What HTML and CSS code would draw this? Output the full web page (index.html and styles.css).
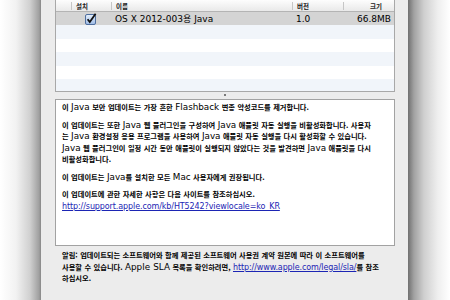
FILE: index.html
```html
<!DOCTYPE html>
<html lang="ko">
<head>
    <meta charset="UTF-8">
    <title>소프트웨어 업데이트</title>
    <link rel="stylesheet" href="styles.css">
</head>
<body>
    <div class="desk">
        <div class="shade-left"></div>
        <div class="window">
            <div class="list">
                <div class="row head">
                    <div class="cell"></div>
                    <div class="cell">설치</div>
                    <div class="cell">이름</div>
                    <div class="cell">버전</div>
                    <div class="cell right">크기</div>
                </div>
                <div class="row selected">
                    <div class="cell"></div>
                    <div class="cell center">
                        <svg class="check" width="12" height="12" viewBox="0 0 12 12">
                            <defs>
                                <linearGradient id="box" x1="0" y1="0" x2="0" y2="1">
                                    <stop offset="0" stop-color="#e8f1fc"/>
                                    <stop offset="1" stop-color="#9dbbe6"/>
                                </linearGradient>
                            </defs>
                            <rect x="0.5" y="1.5" width="10" height="10" rx="1.5" fill="url(#box)" stroke="#4e6e9e"/>
                            <path d="M2.6 6.2 L4.8 9 L10.6 0.8" fill="none" stroke="#111" stroke-width="1.8"/>
                        </svg>
                    </div>
                    <div class="cell">OS X 2012-003용 Java</div>
                    <div class="cell">1.0</div>
                    <div class="cell right">66.8MB</div>
                </div>
                <div class="row blue"></div>
                <div class="row"></div>
                <div class="row blue"></div>
                <div class="row"></div>
                <div class="row blue"></div>
            </div>

            <div class="split"><span class="grip"></span></div>

            <div class="notes">
                <p>이 <span class="en">Java</span> 보안 업데이트는 가장 흔한 <span class="en">Flashback</span> 변종 악성코드를 제거합니다.</p>
                <p>이 업데이트는 또한 <span class="en">Java</span> 웹 플러그인을 구성하여 <span class="en">Java</span> 애플릿 자동 실행을 비활성화합니다. 사용자<br>는 <span class="en">Java</span> 환경설정 응용 프로그램을 사용하여 <span class="en">Java</span> 애플릿 자동 실행을 다시 활성화할 수 있습니다.<br><span class="en">Java</span> 웹 플러그인이 일정 시간 동안 애플릿이 실행되지 않았다는 것을 발견하면 <span class="en">Java</span> 애플릿을 다시<br>비활성화합니다.</p>
                <p>이 업데이트는 <span class="en">Java</span>를 설치한 모든 <span class="en">Mac</span> 사용자에게 권장됩니다.</p>
                <p>이 업데이트에 관한 자세한 사항은 다음 사이트를 참조하십시오.<br><a class="en link" href="#">http://support.apple.com/kb/HT5242?viewlocale=ko_KR</a></p>
            </div>

            <p class="license">알림: 업데이트되는 소프트웨어와 함께 제공된 소프트웨어 사용권 계약 원본에 따라 이 소프트웨어를<br>사용할 수 있습니다. <span class="en">Apple SLA</span> 목록을 확인하려면, <a class="en link" href="#">http://www.apple.com/legal/sla/</a>를 참조<br>하십시오.</p>
        </div>
        <div class="shade-right"></div>
    </div>
</body>
</html>
```

FILE: styles.css
```css
body {
    margin: 0;
    background-color: #fff;
    font-family: "Noto Sans CJK KR", sans-serif;
    color: #000;
}
.desk {
    display: flex;
    height: 300px;
    overflow: hidden;
}
.shade-left {
    width: 41px;
    background: linear-gradient(to right, #fff 0, #f2f2f2 16px, #d0d0d0 30px, #a0a0a0 39px, #888 41px);
}
.shade-right {
    flex: 1;
    background: linear-gradient(to right, #707070 0, #a2a2a2 6px, #cfcfcf 16px, #efefef 30px, #fff 42px);
}
.window {
    width: 340px;
    padding: 0 13px 0 14px;
    background-color: #ececec;
}
.list {
    height: 91px;
    border: 1px solid #a8a8a8;
    border-top: none;
    background-color: #fff;
    overflow: hidden;
}
.row {
    display: grid;
    grid-template-columns: 15px 40px 181px 51px 1fr;
    align-items: center;
    height: 13.5px;
    font-family: "DejaVu Sans", "Noto Sans CJK KR", sans-serif;
    font-size: 9px;
}
.row .cell {
    padding-left: 4px;
    white-space: nowrap;
}
.row .right {
    text-align: right;
    padding: 0 3px 0 0;
}
.row .center {
    display: flex;
    justify-content: center;
    padding: 0;
}
.head {
    height: 11px;
    border-bottom: 1px solid #b4b4b4;
    background: linear-gradient(#fdfdfd, #e9e9e9);
    font-family: "Noto Sans CJK KR", sans-serif;
    font-size: 6.5px;
    font-weight: bold;
    color: #222;
}
.head .cell {
    height: 8px;
    line-height: 8px;
    border-left: 1px solid #c6c6c6;
}
.head .cell:first-child {
    border-left: none;
}
.head .right {
    padding-right: 12px;
}
.selected {
    height: 13px;
    background-color: #d4d4d4;
}
.blue {
    background-color: #f1f5fa;
}
.check {
    display: block;
}
.split {
    height: 7px;
    display: flex;
    justify-content: center;
    align-items: flex-start;
}
.grip {
    width: 2px;
    height: 2px;
    margin-top: 2px;
    background-color: #555;
    border-radius: 1px;
}
.notes {
    height: 143px;
    padding: 2px 6px 0;
    border: 1px solid #a2a2a2;
    background-color: #fff;
}
.notes p, .license {
    margin: 0 0 6px;
    font-size: 7.25px;
    font-weight: bold;
    line-height: 11.5px;
    word-spacing: 0.4px;
    white-space: nowrap;
}
.en {
    font-family: "DejaVu Sans", sans-serif;
    font-size: 8.8px;
    font-weight: normal;
}
.link {
    font-size: 8px;
    letter-spacing: -0.1px;
}
a {
    color: #1c25b4;
    text-decoration: underline;
}
.license {
    margin: 4px 0 0 7px;
}
```
